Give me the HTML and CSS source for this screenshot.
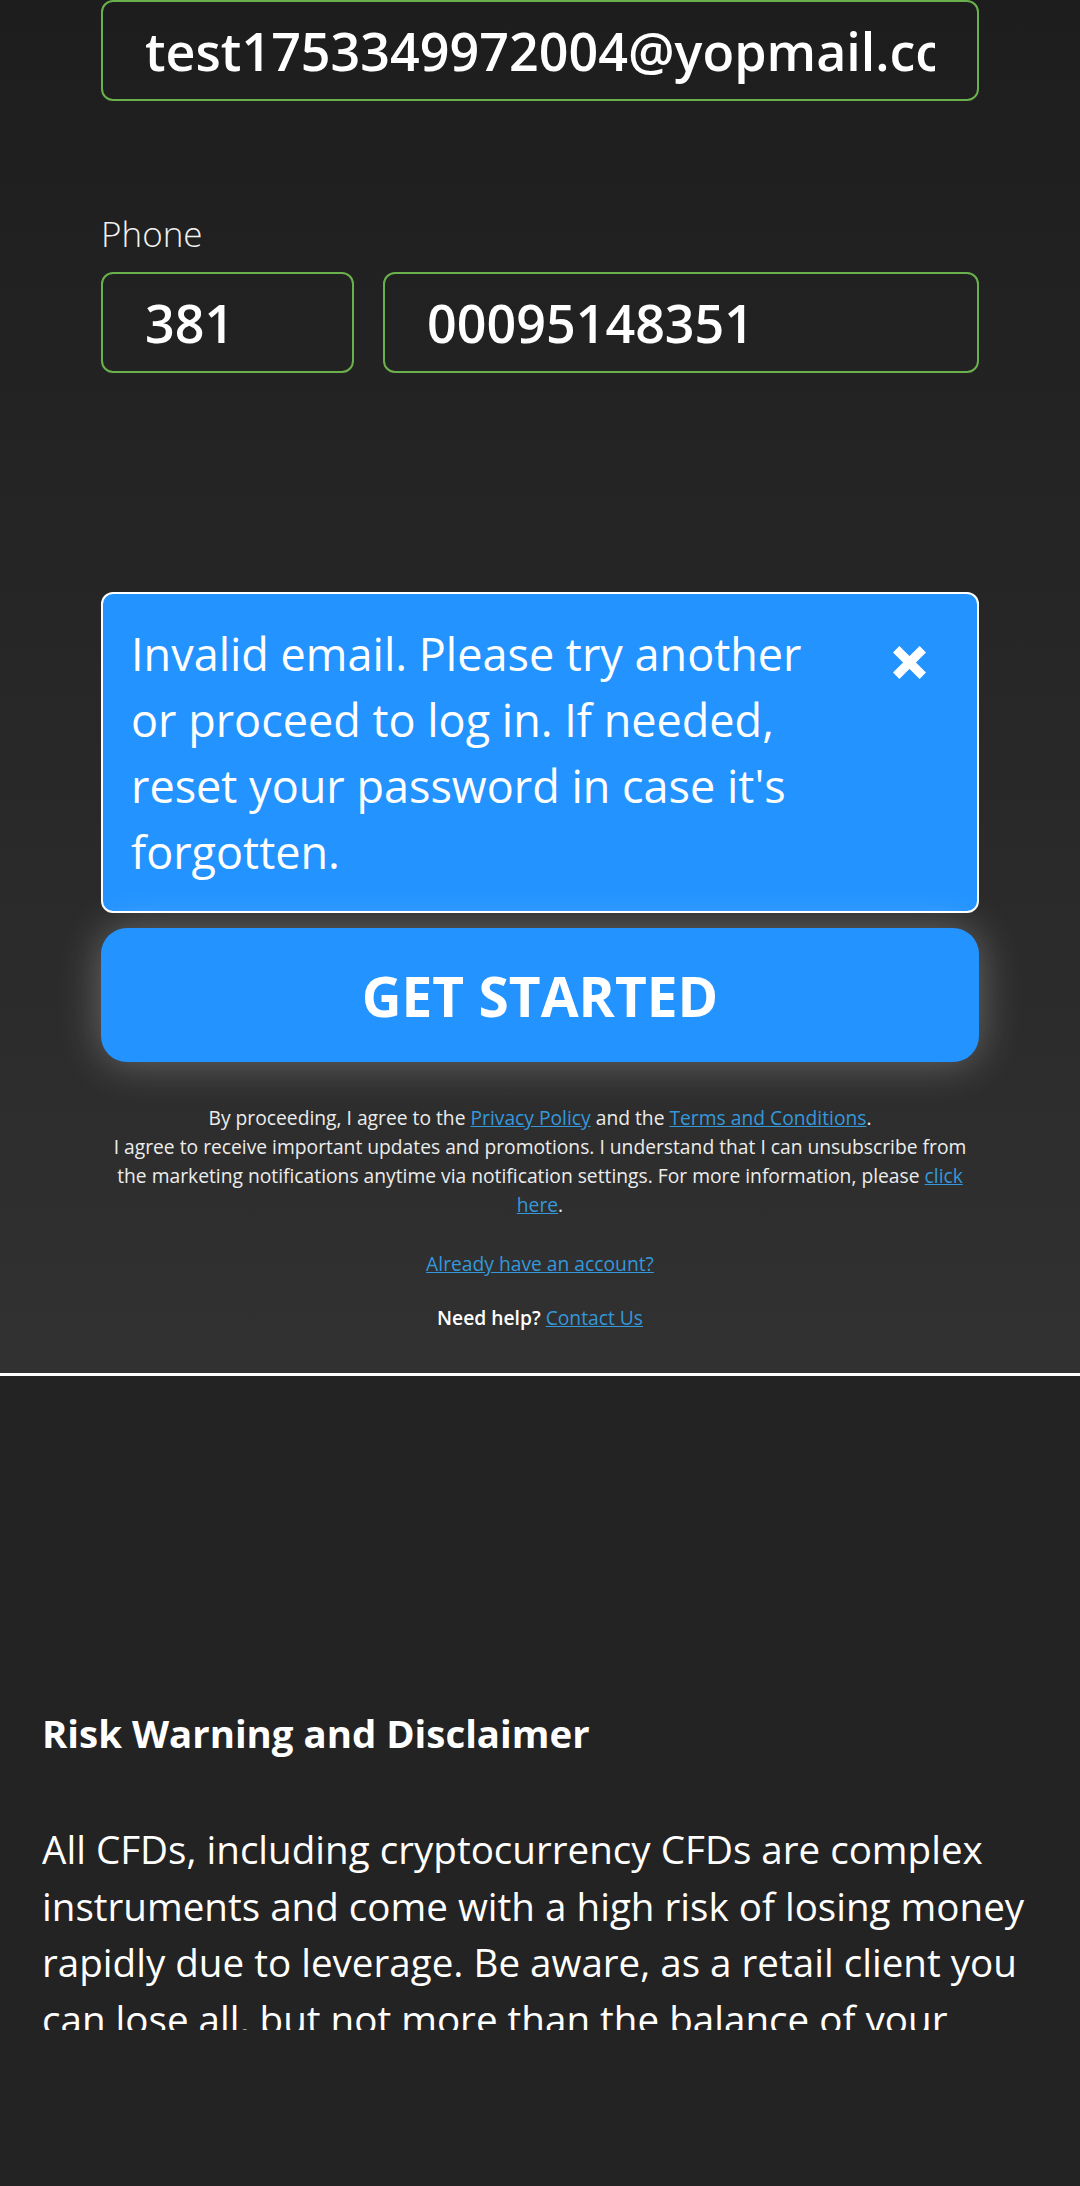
FILE: index.html
```html
<!DOCTYPE html>
<html lang="en">
<head>
<meta charset="utf-8">
<title>Sign up</title>
<link rel="stylesheet" href="styles.css">
</head>
<body>
<section class="signup">
  <input class="field field-email" type="text" value="test1753349972004@yopmail.com" aria-label="Email">
  <div class="label">Phone</div>
  <div class="phone-row">
    <input class="field field-code" type="text" value="381" aria-label="Country code">
    <input class="field field-number" type="text" value="00095148351" aria-label="Phone number">
  </div>
  <div class="alert">
    <p class="alert-text">Invalid email. Please try another or proceed to log in. If needed, reset your password in case it's forgotten.</p>
    <button class="alert-close" type="button" aria-label="Close">
      <svg width="33" height="33" viewBox="0 0 33 33"><path d="M3.2 3.2L29.8 29.8M29.8 3.2L3.2 29.8" stroke="#fff" stroke-width="9" fill="none"/></svg>
    </button>
  </div>
  <button class="cta" type="button">GET STARTED</button>
  <p class="legal">By proceeding, I agree to the <a href="#">Privacy Policy</a> and the <a href="#">Terms and Conditions</a>.<br>I agree to receive important updates and promotions. I understand that I can unsubscribe from the marketing notifications anytime via notification settings. For more information, please <a href="#">click here</a>.</p>
  <p class="small-line"><a href="#">Already have an account?</a></p>
  <p class="small-line help"><strong>Need help?</strong> <a href="#">Contact Us</a></p>
</section>
<section class="risk">
  <h2 class="risk-title">Risk Warning and Disclaimer</h2>
  <div class="risk-text">
    <p>All CFDs, including cryptocurrency CFDs are complex instruments and come with a high risk of losing money rapidly due to leverage. Be aware, as a retail client you can lose all, but not more than the balance of your trading account. You should consider whether you understand how CFDs work and whether you can afford to take the high risk of losing your money.</p>
  </div>
</section>
</body>
</html>
```

FILE: styles.css
```css
html, body {
  margin: 0;
  padding: 0;
}

body {
  background: #232323;
  color: #ffffff;
  font-family: "Open Sans", "Noto Sans", sans-serif;
}

.signup {
  background: linear-gradient(to bottom, #1d1d1d 0%, #262626 45%, #313131 100%);
  padding: 0 101px 41px;
  border-bottom: 3px solid #ffffff;
}

.field {
  display: block;
  box-sizing: border-box;
  width: 100%;
  height: 101px;
  margin: 0;
  padding: 0 42px;
  border: 2px solid #6ab04c;
  border-radius: 12px;
  background: transparent;
  color: #ffffff;
  font-family: "Open Sans", "Noto Sans", sans-serif;
  font-weight: 600;
  font-size: 52px;
  outline: none;
}

.label {
  margin: 107px 0 12px;
  font-weight: 300;
  font-size: 35px;
  line-height: 52px;
  color: #f2f2f2;
}

.phone-row {
  display: flex;
  gap: 29px;
}

.field-code {
  width: 253px;
  flex: 0 0 253px;
}

.field-number {
  flex: 1 1 auto;
  width: auto;
  min-width: 0;
}

.alert {
  display: flex;
  align-items: flex-start;
  margin-top: 219px;
  padding: 27px 51px 26px 28px;
  border: 2px solid #ffffff;
  border-radius: 12px;
  background: #2293ff;
}

.alert-text {
  flex: 1 1 auto;
  margin: 0;
  font-size: 45px;
  line-height: 66px;
  font-weight: 400;
}

.alert-close {
  flex: 0 0 33px;
  width: 33px;
  height: 33px;
  margin: 25px 0 0 70px;
  padding: 0;
  border: 0;
  background: transparent;
}

.alert-close svg {
  display: block;
}

.cta {
  display: block;
  width: 100%;
  height: 134px;
  margin-top: 15px;
  padding: 0;
  border: 0;
  border-radius: 26px;
  background: #2293ff;
  color: #ffffff;
  font-family: "Open Sans", "Noto Sans", sans-serif;
  font-weight: 700;
  font-size: 55px;
  box-shadow: 0 0 44px rgba(255, 255, 255, 0.3);
}

.legal {
  margin: 41px 0 0;
  font-size: 19.25px;
  line-height: 29px;
  text-align: center;
  color: #ececec;
}

.small-line {
  margin: 30px 0 0;
  font-size: 19.25px;
  line-height: 29px;
  text-align: center;
  color: #ffffff;
}

.help {
  margin-top: 25px;
}

.help strong {
  font-weight: 600;
}

a {
  color: #3498db;
  text-decoration: underline;
}

.risk {
  padding: 331px 42px 0;
}

.risk-title {
  margin: 0;
  font-size: 38.4px;
  line-height: 52px;
  font-weight: 700;
}

.risk-text {
  margin-top: 62px;
  height: 209px;
  overflow: hidden;
}

.risk-text p {
  margin: 0;
  font-size: 38.6px;
  line-height: 56.7px;
  font-weight: 400;
}
```
